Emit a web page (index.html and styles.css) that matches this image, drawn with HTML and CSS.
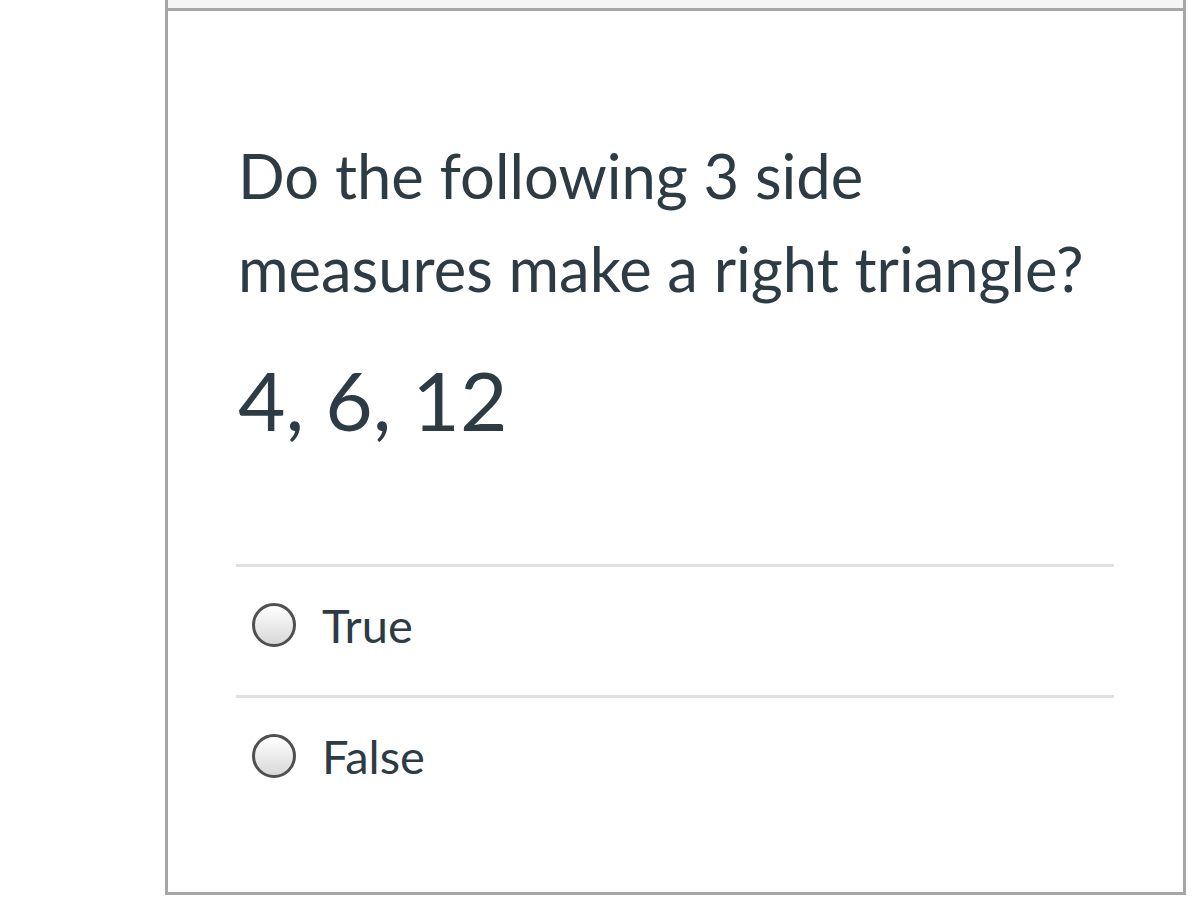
FILE: index.html
```html
<!DOCTYPE html>
<html>
<head>
<meta charset="utf-8">
<link rel="stylesheet" href="styles.css">
</head>
<body>
<div class="page">
  <div class="card">
    <div class="prev"></div>
    <div class="question">
      <div class="text">
        <p class="prompt">Do the following 3 side measures make a right triangle?</p>
        <p class="numbers">4, 6, 12</p>
      </div>
      <div class="answers">
        <label class="answer">
          <span class="radio"></span>
          <span class="label">True</span>
        </label>
        <label class="answer">
          <span class="radio"></span>
          <span class="label">False</span>
        </label>
      </div>
    </div>
  </div>
</div>
</body>
</html>
```
FILE: styles.css
```css
html, body {
  margin: 0;
  padding: 0;
  background: #ffffff;
}
body {
  font-family: Lato, "Open Sans", sans-serif;
  color: #2d3b45;
}
.page {
  padding-left: 165px;
  width: 1021px;
}
.card {
  border-left: 3px solid #a6a6a6;
  border-right: 3px solid #a6a6a6;
  border-bottom: 3px solid #a6a6a6;
  height: 895px;
  box-sizing: border-box;
  display: flex;
  flex-direction: column;
}
.prev {
  height: 8px;
  background: #f5f5f5;
  border-bottom: 3px solid #a6a6a6;
}
.question {
  padding: 0 69px 0 70px;
}
.text {
  padding-top: 118px;
  padding-bottom: 115px;
}
.prompt {
  margin: 0;
  font-size: 61.5px;
  line-height: 93px;
  width: 870px;
}
.numbers {
  margin: 34px 0 0;
  font-size: 82px;
  line-height: 100px;
}
.answers {
  margin-left: -2px;
}
.answer {
  display: flex;
  align-items: center;
  border-top: 3px solid #e0e0e0;
  height: 116px;
  padding-bottom: 12px;
  padding-left: 16px;
}
.radio {
  width: 38px;
  height: 38px;
  border: 3px solid #505050;
  border-radius: 50%;
  background: linear-gradient(#ffffff, #d8d8d8);
  flex: none;
}
.label {
  margin-left: 26px;
  font-size: 47px;
}
```
